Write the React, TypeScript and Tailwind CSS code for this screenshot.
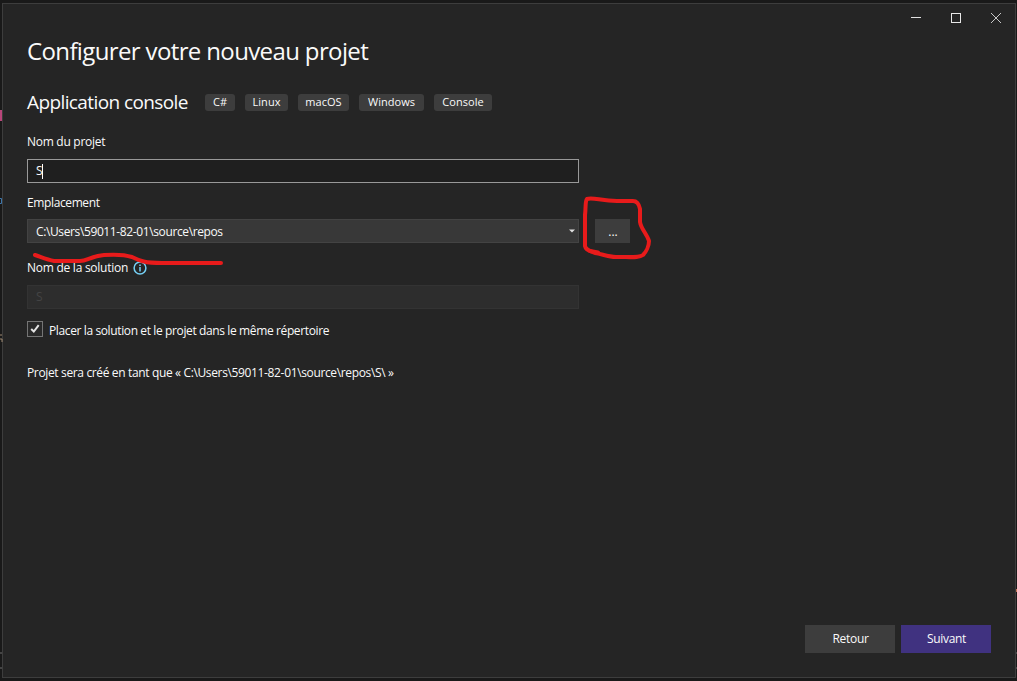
import React from 'react';

const tags = [
  { label: 'C#', size: 'w-[30px]' },
  { label: 'Linux', size: 'w-[43px]' },
  { label: 'macOS', size: 'w-[51px]' },
  { label: 'Windows', size: 'w-[65px]' },
  { label: 'Console', size: 'w-[58px]' },
];

function TitleBar() {
  return (
    <div className="-mr-px flex h-7 justify-end">
      <button aria-label="Minimize" className="flex h-7 w-10 items-center justify-center">
        <svg width="10" height="10" shapeRendering="crispEdges">
          <path d="M0 4.5H10" stroke="#e0e0e0" />
        </svg>
      </button>
      <button aria-label="Maximize" className="flex h-7 w-10 items-center justify-center">
        <svg width="10" height="10" shapeRendering="crispEdges">
          <rect x=".5" y=".5" width="9" height="9" fill="none" stroke="#e8e8e8" />
        </svg>
      </button>
      <button aria-label="Close" className="flex h-7 w-10 items-center justify-center">
        <svg width="10" height="10">
          <path d="M0 0L10 10M10 0L0 10" stroke="#c8c8c8" />
        </svg>
      </button>
    </div>
  );
}

function Form() {
  return (
    <main className="flex flex-1 flex-col pl-6">
      <h1 className="h-8 text-2xl leading-8 tracking-[-0.63px]">Configurer votre nouveau projet</h1>
      <div className="mt-[23px] flex h-6 items-center">
        <h2 className="w-[178px] text-[19px] leading-6 tracking-[-0.6px]">Application console</h2>
        <div className="flex gap-2.5">
          {tags.map((t) => (
            <span
              key={t.label}
              className={`${t.size} flex h-[17px] justify-center rounded-[3px] bg-[#3d3d3d] text-[11px] leading-[15px] tracking-[0.05px]`}
            >
              {t.label}
            </span>
          ))}
        </div>
      </div>

      <label className="mt-5 h-4 leading-4 tracking-[-0.28px]">Nom du projet</label>
      <div className="mt-[9px] flex h-6 w-[552px] items-center border border-[#999999] bg-[#1f1f1f] pl-2">
        <span className="tracking-[-0.6px]">S</span>
        <span className="h-[15px] w-px bg-white" />
      </div>

      <label className="mt-3 h-4 leading-4 tracking-[-0.38px]">Emplacement</label>
      <div className="mt-2 flex gap-4">
        <div className="flex h-6 w-[552px] items-center justify-between border border-[#434343] bg-[#383838] pr-[3px] pl-2">
          <span className="pt-[2px] tracking-[-0.38px]">C:\Users\59011-82-01\source\repos</span>
          <svg width="6" height="4">
            <path d="M0 .5H6L3 3.5Z" fill="#e0e0e0" />
          </svg>
        </div>
        <button className="h-6 w-[35px] bg-[#3d3d3d] pt-px pl-px">...</button>
      </div>

      <div className="mt-[17px] flex h-4 items-center gap-[5px]">
        <label className="w-[101px] leading-4 whitespace-nowrap tracking-[-0.26px]">Nom de la solution</label>
        <svg width="14" height="14" fill="none">
          <circle cx="7" cy="7" r="5.9" stroke="#75d0f5" strokeWidth="1.5" />
          <path d="M7 6V10.5M7 3.5V5" stroke="#75d0f5" strokeWidth="1.5" />
        </svg>
      </div>
      <div className="mt-[9px] flex h-6 w-[552px] items-center border border-[#333333] bg-[#2d2d2d] pl-2 text-[#444444]">S</div>

      <div className="mt-3 flex h-4 gap-[6px]">
        <div className="flex h-4 w-4 items-center justify-center border border-[#757575] bg-[#292929]">
          <svg width="10" height="10" fill="none">
            <path d="M1.2 5L3.8 7.5L8.7 1.2" stroke="#e4e4e4" strokeWidth="2" />
          </svg>
        </div>
        <span className="mt-[2px] leading-4 tracking-[-0.38px]">Placer la solution et le projet dans le même répertoire</span>
      </div>
      <p className="mt-7 h-4 leading-4 tracking-[-0.355px]">Projet sera créé en tant que « C:\Users\59011-82-01\source\repos\S\ »</p>
    </main>
  );
}

export default function App() {
  return (
    <div className="relative h-[681px] w-[1017px] overflow-hidden bg-[#191919] pt-[3px] pl-[2px] font-['Open_Sans',sans-serif] text-[12px] text-[#fafafa]">
      <div className="flex h-[675px] w-[1014px] flex-col border border-[#3d3d3d] bg-[#252525]">
        <TitleBar />
        <div className="h-[3px]" />
        <Form />
        <footer className="flex justify-end gap-1.5 pr-6 pb-6">
          <button className="h-7 w-[90px] bg-[#3d3d3d] pl-px tracking-[-0.3px]">Retour</button>
          <button className="h-7 w-[90px] bg-[#403280] pl-px tracking-[-0.3px]">Suivant</button>
        </footer>
      </div>
      <svg className="pointer-events-none absolute inset-0" width="1017" height="681" fill="none">
        <path d="M0 110h2v11h-2z" fill="#b8467a" />
        <path d="M0 198.5h1.5v5H0" stroke="#3f78ad" />
        <path d="M0 335h2M0 339h2v3" stroke="#a08a72" />
        <path d="M0 653h2M0 668h2M1016 653h1M1016 668h1" stroke="#444" strokeWidth="2" />
        <path d="M1016 589h1v3h-1z" fill="#c07050" />
        <g stroke="#e81b1b" strokeWidth="4" strokeLinecap="round" strokeLinejoin="round">
          <path d="M35 255C41 257 47 260 54 261H80C87 261 91 256 104 255C118 254 126 255 132 257C140 261 145 263 162 263H221" />
          <path d="M587 199C593 197 601 201 617 201H633C637 201 639 204 640 209V222C641 229 647 234 649 241C649 246 646 252 643 255C639 258 632 257 616 257C608 257 602 254 595 253C591 251 586 251 585 246V215C586 207 585 201 587 199Z" />
          <path d="M590 251L598 252.5" />
        </g>
      </svg>
    </div>
  );
}
